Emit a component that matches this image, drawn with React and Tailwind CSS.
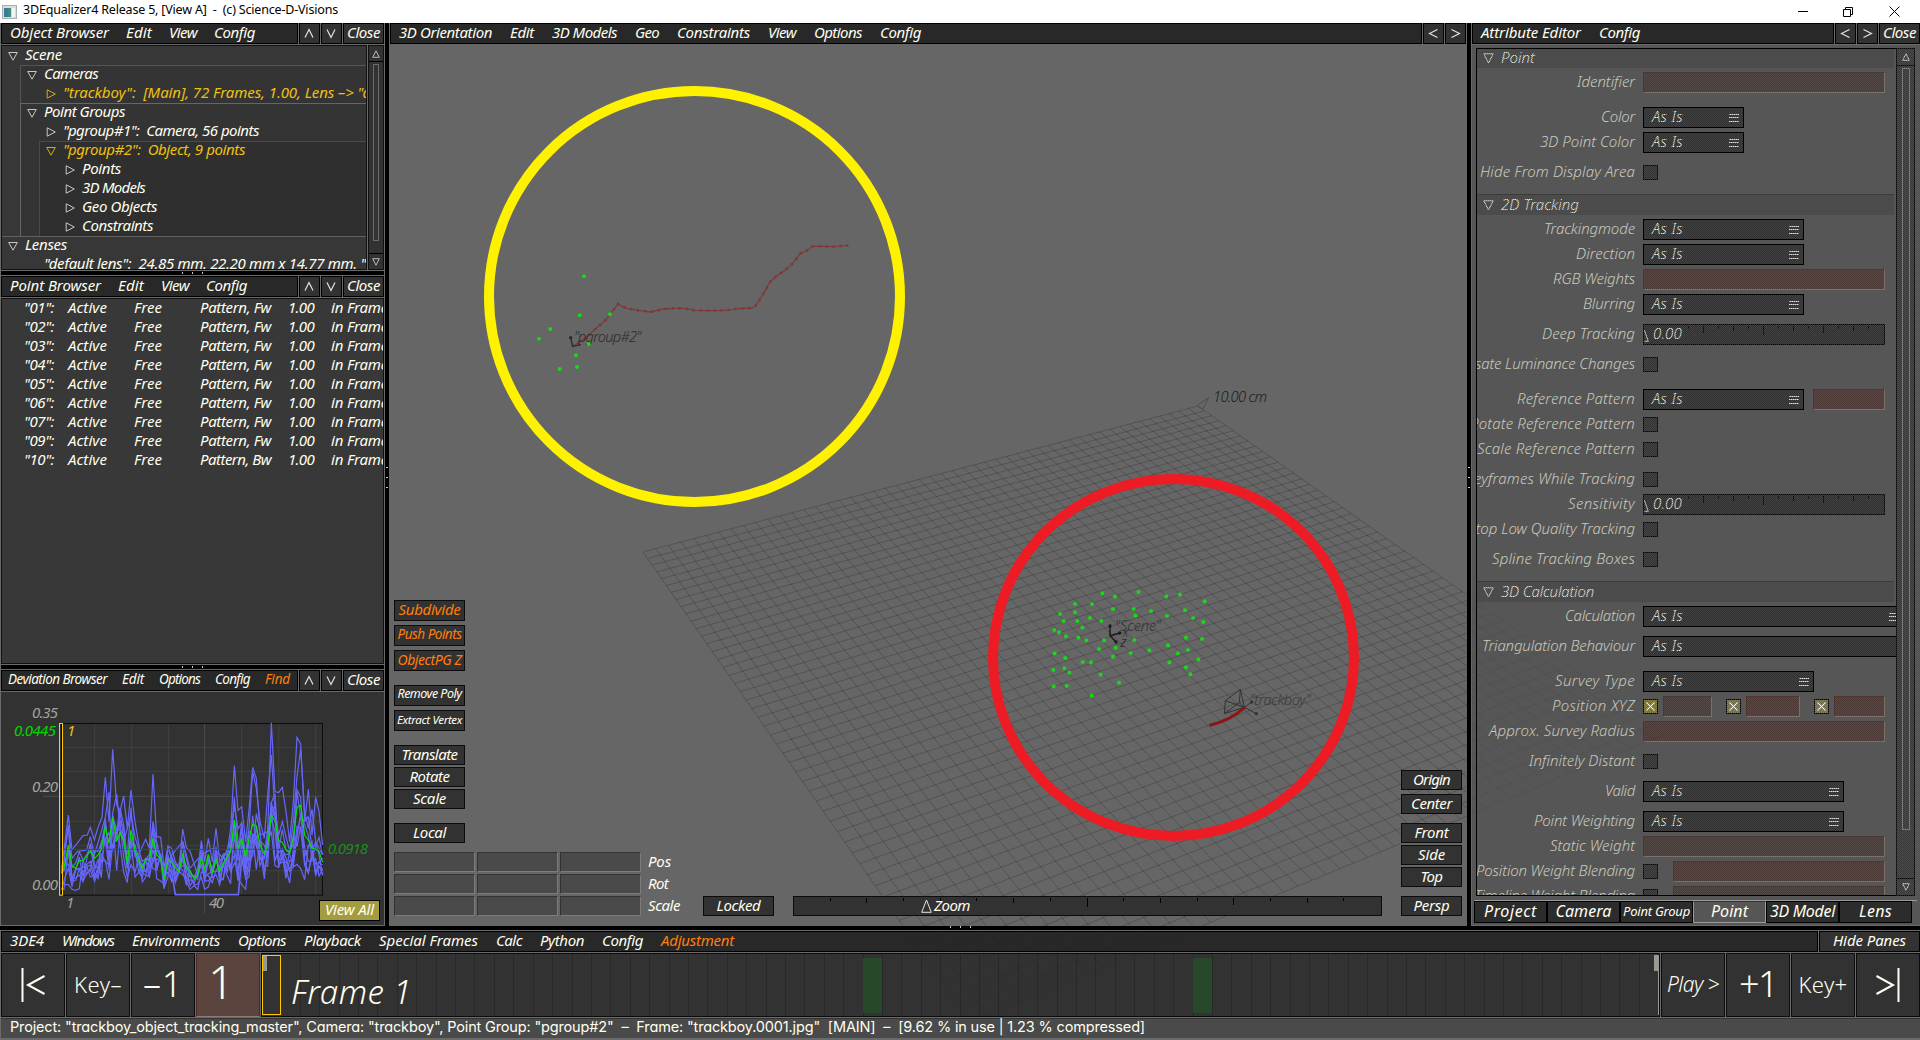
import React, { useLayoutEffect, useRef, useState } from "react";

/* Text whose letter spacing is tuned so that it spans w pixels. */
function Fit({ w, className = "", children }) {
  const ref = useRef(null);
  const [ls, setLs] = useState(0);
  useLayoutEffect(() => {
    if (!w || !ref.current) return;
    const el = ref.current;
    el.style.letterSpacing = "0px";
    const n = String(children).length;
    setLs((w - el.getBoundingClientRect().width) / n);
  }, [w, children]);
  return (
    <span ref={ref} className={"inline-block whitespace-pre pb-0.5 leading-none " + className} style={{ letterSpacing: ls + "px" }}>
      {children}
    </span>
  );
}

function Chevron({ dir }) {
  const d = { up: "M1 9.5 5 1.5 9 9.5", down: "M1 1.5 5 9.5 9 1.5", left: "M9.5 1.5 1.5 5.5 9.5 9.5", right: "M1.5 1.5 9.5 5.5 1.5 9.5" }[dir];
  return (
    <svg className="h-[11px] w-[11px]" viewBox="0 0 11 11" fill="none" stroke="#e6e6d8" strokeWidth="1.2">
      <path d={d} />
    </svg>
  );
}

function Cell({ className = "", children }) {
  return <div className={"flex shrink-0 items-center justify-center border border-black bg-[#323232] " + className}>{children}</div>;
}

function MenuBar({ items, arrows, close = true, small, gap = "gap-[17px]", className = "" }) {
  return (
    <div className={"flex h-[21px] shrink-0 gap-px bg-[#6a6a6a] " + className}>
      <div className={"flex min-w-0 flex-1 items-center border border-black bg-[#282828] " + gap + (small ? " pl-1.5 text-[13.5px]" : " pl-2")}>
        {items.map(([t, w, c]) => (
          <Fit key={t} w={w} className={c || ""}>{t}</Fit>
        ))}
      </div>
      {arrows.map((a) => (
        <Cell key={a} className="w-[21px]"><Chevron dir={a} /></Cell>
      ))}
      {close && <Cell className="w-[41px]"><Fit w={33}>Close</Fit></Cell>}
    </div>
  );
}

function Dots({ vertical }) {
  return (
    <div className={"flex items-center justify-center gap-[9px] " + (vertical ? "flex-col" : "")}>
      {[0, 1, 2].map((i) => (
        <i key={i} className={"bg-[#c8c8c8] " + (vertical ? "h-px w-0.5" : "h-0.5 w-px")} />
      ))}
    </div>
  );
}

function Tri({ open, color = "#c8c8be" }) {
  return (
    <svg className="mr-[7px] h-[10px] w-[10px] shrink-0" viewBox="0 0 10 10" fill="none" stroke={color} strokeWidth="1">
      <path d={open ? "M.7 1.5H9.3L5 9.2Z" : "M1.2 .8V9.2L9.3 5Z"} />
    </svg>
  );
}

function TreeRow({ open, leaf, w, hot, pad, children }) {
  return (
    <div className={"flex h-[19px] items-center " + pad + (hot ? " text-[#f0c010]" : "")}>
      {leaf ? <span className="w-[17px] shrink-0" /> : <Tri open={open} color={hot ? "#d8aa10" : undefined} />}
      <Fit w={w}>{children}</Fit>
    </div>
  );
}

function ObjectBrowser() {
  return (
    <div className="flex h-[226px] gap-px border-t border-[#6a6a6a] bg-[#6a6a6a]">
      <div className="min-w-0 flex-1 overflow-hidden border border-[#111] bg-[#373737]">
        <TreeRow open w={37} pad="pl-[6px]">Scene</TreeRow>
        <div className="ml-[18px] border-l border-t border-[#555] bg-[#343434]">
          <div className="-mt-px">
            <TreeRow open w={54} pad="pl-[6px]">Cameras</TreeRow>
            <TreeRow w={308} hot pad="pl-[25px]">{'"trackboy":  [Main], 72 Frames, 1.00, Lens –> "d'}</TreeRow>
          </div>
        </div>
        <div className="ml-[18px] border-l border-t border-[#666] bg-[#343434]">
          <div className="-mt-px">
            <TreeRow open w={81} pad="pl-[6px]">Point Groups</TreeRow>
            <TreeRow w={196} pad="pl-[25px]">{'"pgroup#1":  Camera, 56 points'}</TreeRow>
          </div>
          <div className="ml-[18px] border-l border-t border-[#4a4a4a] bg-[#2f2f2f]">
            <div className="-mt-px">
              <TreeRow open w={182} hot pad="pl-[6px]">{'"pgroup#2":  Object, 9 points'}</TreeRow>
              <TreeRow w={39} pad="pl-[25px]">Points</TreeRow>
              <TreeRow w={63} pad="pl-[25px]">3D Models</TreeRow>
              <TreeRow w={75} pad="pl-[25px]">Geo Objects</TreeRow>
              <TreeRow w={71} pad="pl-[25px]">Constraints</TreeRow>
            </div>
          </div>
        </div>
        <div className="border-t border-[#606060]">
          <div className="-mt-px">
            <TreeRow open w={42} pad="pl-[6px]">Lenses</TreeRow>
            <TreeRow leaf w={322} pad="pl-[25px]">{'"default lens":  24.85 mm. 22.20 mm x 14.77 mm. "'}</TreeRow>
          </div>
        </div>
      </div>
      <div className="flex w-4 flex-col border border-[#111] bg-[#323232]">
        <div className="flex h-4 items-center justify-center border-b border-black">
          <svg className="h-2 w-2" viewBox="0 0 8 8" fill="none" stroke="#bbb"><path d="M4 .8 7.3 7.3H.7Z" /></svg>
        </div>
        <div className="flex flex-1 justify-center pt-0.5"><div className="h-[177px] w-1.5 border border-[#6a6a6a]" /></div>
        <div className="flex h-4 items-center justify-center border-t border-black">
          <svg className="h-2 w-2" viewBox="0 0 8 8" fill="none" stroke="#bbb"><path d="M.7 .7H7.3L4 7.2Z" /></svg>
        </div>
      </div>
    </div>
  );
}

const POINTS = [["01", "Fw"], ["02", "Fw"], ["03", "Fw"], ["04", "Fw"], ["05", "Fw"], ["06", "Fw"], ["07", "Fw"], ["09", "Fw"], ["10", "Bw"]];

function PointBrowser() {
  return (
    <div className="h-[368px] border-y border-[#6a6a6a]">
      <div className="h-full overflow-hidden border border-[#111] bg-[#383838]">
        {POINTS.map(([n, dir]) => (
          <div key={n} className="grid h-[19px] grid-cols-[44px_66px_66px_88px_43px_50px] items-center justify-items-start overflow-hidden pl-[22px]">
            <Fit w={30}>{`"${n}":`}</Fit>
            <Fit w={39}>Active</Fit>
            <Fit w={28}>Free</Fit>
            <Fit w={71}>{`Pattern, ${dir}`}</Fit>
            <Fit w={26}>1.00</Fit>
            <Fit w={57}>in Frame</Fit>
          </div>
        ))}
      </div>
    </div>
  );
}

/* Average deviation curve, one vertex per frame. */
const AVG = [[185, 655], [192, 640], [205, 570], [216, 633], [227, 640], [238, 617], [249, 617], [260, 603], [271, 588], [284, 610], [294, 600], [304, 583], [316, 515], [327, 565], [338, 487], [350, 557], [360, 533], [371, 555], [382, 627], [393, 525], [405, 587], [416, 617], [427, 640], [437, 613], [448, 615], [459, 550], [470, 600], [482, 610], [492, 675], [504, 613], [515, 622], [526, 638], [537, 650], [548, 595], [559, 638], [570, 647], [583, 672], [593, 660], [604, 610], [614, 643], [625, 598], [637, 655], [648, 613], [659, 650], [670, 625], [682, 605], [692, 590], [703, 495], [714, 580], [725, 553], [737, 605], [747, 550], [758, 508], [769, 513], [780, 570], [793, 597], [803, 570], [814, 480], [825, 497], [836, 557], [847, 562], [858, 585], [869, 595], [880, 550], [891, 457], [902, 451], [914, 540], [925, 555], [936, 580], [947, 582], [957, 590], [968, 622]];
const PEAK = "185,640 205,480 216,585 249,542 262,540 271,517 283,555 294,517 306,487 316,367 327,500 338,283 350,450 360,470 371,423 382,520 393,405 405,500 420,590 437,553 448,580 459,357 470,545 482,547 492,640 504,573 515,580 526,620 537,640 548,522 559,578 570,588 593,660 604,557 614,620 625,550 637,620 648,520 659,620 670,600 682,590 692,520 703,332 714,467 725,455 737,560 747,465 758,337 769,370 780,540 803,530 814,203 825,410 836,413 847,397 858,470 869,560 880,440 891,247 902,267 914,500 925,403 936,540 947,427 957,470 968,570";
const PEAK2 = "192,600 205,517 216,610 232,590 260,585 271,545 283,600 304,530 316,487 327,412 333,560 338,475 350,417 360,520 371,560 393,480 405,545 427,620 448,600 459,500 470,560 492,650 515,600 548,560 570,640 604,600 640,580 670,610 692,560 703,427 714,560 737,590 747,520 758,350 769,400 780,500 793,550 803,420 814,300 825,470 836,540 847,500 869,590 880,500 891,365 902,283 914,470 925,520 936,463 947,560 968,600";
const TRACES = (() => {
  let s = 11;
  const rnd = () => ((s = (s * 16807) % 2147483647) / 2147483647);
  return Array.from({ length: 7 }, (_, k) => {
    let m = 0.5 + k * 0.13;
    return AVG.map(([x, y]) => {
      m = m * 0.35 + (0.08 + rnd() * 1.45) * 0.65;
      return `${x},${Math.min(706, Math.round(720 - (720 - y) * m))}`;
    }).join(" ");
  });
})();

function ChartText({ x, y, w, fill = "#a4a49c", children }) {
  return <text x={x} y={y + 15} textLength={w} fontSize="45" fill={fill}>{children}</text>;
}

function DeviationChart() {
  return (
    <div className="relative h-[235px] border-y border-[#6a6a6a] bg-[#323232]">
      <svg className="h-full w-full" viewBox="3 111 1149 699" fill="none">
        {[284, 395, 506, 725, 836, 947].map((x) => <path key={x} d={`M${x} 206V720`} stroke="#414141" strokeWidth="3" />)}
        {[277, 349, 499, 572, 647].map((y) => <path key={y} d={`M183 ${y}H967`} stroke="#414141" strokeWidth="3" />)}
        <path d="M129 424H967M614 206V774" stroke="#4c4c4c" strokeWidth="3" />
        <rect x="184.500" y="205.500" width="783" height="515" stroke="#0c0c0c" strokeWidth="3" />
        <g stroke="#6666fa" strokeWidth="3.600">
          {TRACES.map((p, i) => <polyline key={i} points={p} />)}
          <polyline points={PEAK} />
          <polyline points={PEAK2} />
          <polyline points="504,640 515,650 526,719 715,719 725,610 737,660" strokeWidth="5" />
        </g>
        <path d="M183 583H967" stroke="#1c641c" strokeWidth="3" />
        <polyline points={AVG.map((p) => p.join(",")).join(" ")} stroke="#00e400" strokeWidth="3.600" />
        <rect x="178.500" y="205.500" width="9" height="515" stroke="#ffc800" strokeWidth="3" />
        <ChartText x={96} y={175} w={78}>0.35</ChartText>
        <ChartText x={42} y={229} w={126} fill="#00d800">0.0445</ChartText>
        <ChartText x={201} y={228} w={16} fill="#f0c010">1</ChartText>
        <ChartText x={96} y={397} w={78}>0.20</ChartText>
        <ChartText x={96} y={691} w={78}>0.00</ChartText>
        <ChartText x={198} y={745} w={16}>1</ChartText>
        <ChartText x={627} y={745} w={45}>40</ChartText>
        <ChartText x={983} y={583} w={121} fill="#1c8c1c">0.0918</ChartText>
      </svg>
      <div className="absolute bottom-[4px] right-[4px] flex h-[21px] w-[61px] items-center justify-center border border-black bg-[#a49c40]">
        <Fit w={49}>View All</Fit>
      </div>
    </div>
  );
}

/* Ground plane: a square lattice seen through a projective map. */
const CORNERS = [[643, 552], [1198, 406], [1665, 734], [970, 1022]];
function project(u, v) {
  const [[x0, y0], [x1, y1], [x2, y2], [x3, y3]] = CORNERS;
  const dx1 = x1 - x2, dx2 = x3 - x2, dx3 = x0 - x1 + x2 - x3;
  const dy1 = y1 - y2, dy2 = y3 - y2, dy3 = y0 - y1 + y2 - y3;
  const den = dx1 * dy2 - dx2 * dy1;
  const g = (dx3 * dy2 - dx2 * dy3) / den;
  const h = (dx1 * dy3 - dx3 * dy1) / den;
  const w = g * u + h * v + 1;
  return [((x1 - x0 + g * x1) * u + (x3 - x0 + h * x3) * v + x0) / w, ((y1 - y0 + g * y1) * u + (y3 - y0 + h * y3) * v + y0) / w].map((n) => n.toFixed(1)).join(" ");
}
const GRID = Array.from({ length: 51 }, (_, i) => i / 50)
  .map((t) => `M${project(t, 0)}L${project(t, 1)}M${project(0, t)}L${project(1, t)}`)
  .join("");

const SCENE_POINTS = [[367, 640], [405, 650], [475, 636], [559, 649], [600, 644], [674, 664], [285, 672], [336, 672], [399, 687], [461, 687], [513, 693], [615, 691], [285, 697], [240, 702], [466, 707], [561, 708], [330, 714], [639, 714], [251, 723], [292, 723], [364, 723], [670, 726], [307, 743], [223, 750], [237, 757], [258, 769], [295, 773], [319, 781], [372, 781], [463, 780], [618, 773], [666, 777], [357, 807], [407, 803], [564, 796], [508, 811], [624, 810], [452, 819], [224, 820], [594, 820], [256, 834], [399, 830], [655, 838], [308, 846], [333, 847], [568, 847], [220, 870], [253, 865], [618, 862], [268, 878], [362, 884], [631, 883], [221, 919], [260, 918], [417, 908], [335, 947]];
const GROUP_POINTS = [[312, 589], [299, 706], [390, 703], [211, 747], [177, 776], [326, 792], [288, 826], [291, 861], [239, 867]];
const PATH = "276,800 296,788 322,770 337,755 357,737 381,716 395,697 413,672 440,685 475,691 512,696 550,687 585,685 612,685 645,691 690,692 735,691 775,686 815,684 826,678 840,657 856,632 868,608 888,589 915,571 938,551 960,521 980,512 997,499 1030,499 1060,500 1105,496";

function Scene() {
  return (
    <svg className="absolute inset-0 h-full w-full font-light" viewBox="389 44 1078 882" fill="none">
      <path d={GRID} stroke="#000" strokeOpacity=".19" strokeWidth="1" />
      <g transform="translate(980 380) scale(.33333)">
        <path d="M652 77 686 52 668 88Z" stroke="#4c4c4c" strokeWidth="3" />
        <text x="699" y="66" fontSize="44" textLength="162" fill="#1c1c1c">10.00 cm</text>
        <g stroke="#1c1c1c" strokeWidth="4.500"><path d="M390 738V767L408 786M390 767 419 759" /></g>
        <g fill="#1c1c1c"><circle cx="390" cy="738" r="5" /><circle cx="419" cy="759" r="5" /><circle cx="408" cy="786" r="5" /></g>
        <text x="405" y="752" fontSize="44" textLength="138" fill="#333">"Scene"</text>
        <text x="428" y="770" fontSize="30" fill="#222">X</text>
        <text x="421" y="801" fontSize="32" fill="#111">Z</text>
        <path d="M736 962 781 928 778 968 733 1001ZM793 982 736 962M793 982 781 928M793 982 778 968M793 982 733 1001M793 982 829 1001M793 982 815 966" stroke="#333" strokeWidth="3" />
        <circle cx="829" cy="1001" r="5" fill="#333" />
        <circle cx="815" cy="966" r="5" fill="#333" />
        <text x="809" y="976" fontSize="44" textLength="184" fill="#3a3a3a">"trackboy"</text>
        <path d="M692 1035Q750 1022 793 984" stroke="#8c1616" strokeWidth="9" strokeLinecap="round" />
        <g fill="#18d818">{SCENE_POINTS.map(([x, y]) => <rect key={x + "," + y} x={x - 5.5} y={y - 5.5} width="11" height="11" rx="3" />)}</g>
      </g>
      <g transform="translate(480 80) scale(.33333)">
        <polyline points={PATH} stroke="#7d3c3c" strokeWidth="4" />
        <polyline points={PATH} stroke="#843434" strokeWidth="8" strokeDasharray="5 16" />
        <path d="M272 773 278 799 303 794" stroke="#2a2a2a" strokeWidth="4" />
        <circle cx="272" cy="773" r="5" fill="#2a2a2a" />
        <text x="282" y="786" fontSize="44" textLength="202" fill="#2c2c2c">"pgroup#2"</text>
        <g fill="#18d818">{GROUP_POINTS.map(([x, y]) => <circle key={x} cx={x} cy={y} r="6" />)}</g>
      </g>
      <circle cx="694.500" cy="296.500" r="205.500" stroke="#fff200" strokeWidth="10" />
      <ellipse cx="1173.500" cy="657.500" rx="180.500" ry="178.500" stroke="#ed1c24" strokeWidth="10" />
    </svg>
  );
}

function Btn({ w, className = "", children }) {
  return (
    <div className={"flex items-center justify-center border border-[#0c0c0c] bg-[#323232] " + className}>
      <Fit w={w}>{children}</Fit>
    </div>
  );
}

const TICKS = ["h-[3px]", "h-[5px]", "h-[3px]", "h-[7px]", "h-[3px]", "h-[5px]", "h-[3px]", "h-[9px]", "h-[3px]", "h-[5px]", "h-[3px]", "h-[7px]", "h-[3px]", "h-[5px]", "h-[3px]", "h-0"];

function Viewport() {
  return (
    <div className="relative flex flex-1 items-end overflow-hidden bg-[#666] pb-[10px] pl-[5px] pr-[5px]">
      <Scene />
      <div className="relative">
        <div className="flex w-[71px] flex-col">
          <Btn w={62} className="h-[21px] text-[#ff7f0a]">Subdivide</Btn>
          <Btn w={64} className="mt-1 h-[21px] text-[13.500px] text-[#ff7f0a]">Push Points</Btn>
          <Btn w={64} className="mt-1 h-[21px] text-[14px] text-[#ff7f0a]">ObjectPG Z</Btn>
          <Btn w={64} className="mt-3.5 h-[21px] text-[12.500px]">Remove Poly</Btn>
          <Btn w={65} className="mt-1 h-[21px] text-[11.500px]">Extract Vertex</Btn>
          <Btn w={56} className="mt-3.5 h-5">Translate</Btn>
          <Btn w={40} className="mt-0.5 h-5">Rotate</Btn>
          <Btn w={33} className="mt-0.5 h-5">Scale</Btn>
          <Btn w={33} className="mt-3.5 h-5">Local</Btn>
        </div>
        <div className="mt-[9px] grid grid-cols-[81px_81px_81px_38px] gap-x-0.5 gap-y-0.5">
          {[["Pos", 23], ["Rot", 20], ["Scale", 32]].map(([t, w]) => (
            <React.Fragment key={t}>
              {[0, 1, 2].map((i) => <div key={i} className="h-5 border border-b-[#7c7c7c] border-l-[#333] border-r-[#7c7c7c] border-t-[#333] bg-[#4a4a4a]" />)}
              <div className="flex items-center pl-[5px]"><Fit w={w}>{t}</Fit></div>
            </React.Fragment>
          ))}
        </div>
      </div>
      <Btn w={44} className="relative ml-[22px] h-5 w-[71px]">Locked</Btn>
      <div className="relative ml-[19px] flex h-5 w-[589px] border border-[#0c0c0c] bg-[#323232] pt-px">
        {TICKS.map((h, i) => <div key={i} className="flex flex-1 justify-end"><i className={"w-px bg-black " + h} /></div>)}
        <div className="absolute left-[127px] top-0 flex h-full items-center gap-0.5">
          <svg className="h-[14px] w-[11px]" viewBox="0 0 11 14" fill="none" stroke="#e6e6d8"><path d="M5.500 1 10.300 13.300H.7Z" /></svg>
          <Fit w={36}>Zoom</Fit>
        </div>
      </div>
      <div className="relative ml-auto flex w-[61px] flex-col">
        <Btn w={37} className="h-5">Origin</Btn>
        <Btn w={41} className="mt-1 h-5">Center</Btn>
        <Btn w={34} className="mt-[9px] h-5">Front</Btn>
        <Btn w={27} className="mt-0.5 h-5">Side</Btn>
        <Btn w={22} className="mt-0.5 h-5">Top</Btn>
        <Btn w={36} className="mt-[9px] h-5">Persp</Btn>
      </div>
    </div>
  );
}

/* Checkered veil laid over disabled widgets. */
const VEIL = " relative after:pointer-events-none after:absolute after:-inset-px after:bg-[repeating-conic-gradient(rgba(86,86,86,.5)_0_25%,rgba(86,86,86,.05)_0_50%)] after:bg-[length:2px_2px] after:content-['']";

const Red = ({ className }) => <div className={"h-[21px] border border-b-[#8a7a74] border-l-[#4a2a26] border-r-[#8a7a74] border-t-[#4a2a26] bg-[#4e3a37] " + className + VEIL} />;
const Check = ({ on, className = "" }) => (
  <div className={"flex h-[15px] w-[15px] items-center justify-center self-center border border-black " + (on ? "bg-[#8c8440] " : "bg-[#323232] ") + className + VEIL}>
    {on && <svg className="h-[9px] w-[9px]" viewBox="0 0 9 9" stroke="#fffff0" strokeWidth="1.2"><path d="M.5 .5 8.500 8.500M8.500 .5 .5 8.500" /></svg>}
  </div>
);
const Select = ({ className, bare }) => (
  <div className={"flex h-[21px] shrink-0 items-center justify-between overflow-hidden border border-black bg-[#2e2e2e] pl-2 pr-1 " + className + VEIL}>
    <Fit w={31}>As Is</Fit>
    {!bare && <span className="flex h-[8px] w-[10px] flex-col justify-between"><i className="h-px bg-[#e0e0d4]" /><i className="h-px bg-[#e0e0d4]" /><i className="h-px bg-[#e0e0d4]" /></span>}
  </div>
);
const Slider = () => (
  <div className={"flex h-[21px] w-[242px] border border-black bg-[#2e2e2e] pt-px" + VEIL}>
    {TICKS.map((h, i) => <div key={i} className="flex flex-1 justify-end">{i > 1 && <i className={"w-px bg-black " + h} />}</div>)}
    <div className="absolute left-0 top-0 flex h-full items-center gap-1">
      <svg className="h-[14px] w-[5px]" viewBox="0 0 5 14" fill="none" stroke="#e6e6d8"><path d="M.3 2 4.300 13.300H.5" /></svg>
      <Fit w={29}>0.00</Fit>
    </div>
  </div>
);

function Row({ label, w, gap = "mt-1", children }) {
  return (
    <div className={"flex h-[21px] shrink-0 " + gap}>
      <div className="flex w-[158px] shrink-0 items-center justify-end text-[#cacabe]"><Fit w={w} className="shrink-0">{label}</Fit></div>
      <div className="ml-2 flex items-stretch">{children}</div>
    </div>
  );
}

function Section({ title, w, className = "h-[21px] mt-[11px] border-t border-[#333]" }) {
  return (
    <div className={"mr-0.5 flex shrink-0 items-center bg-[#484848] pl-1.5 " + className + VEIL}>
      <svg className="mr-[7px] h-[11px] w-[11px]" viewBox="0 0 11 11" fill="none" stroke="#e6e6d8"><path d="M.8 .8H10.200L5.500 10Z" /></svg>
      <Fit w={w}>{title}</Fit>
    </div>
  );
}

function AttributeForm() {
  return (
    <div className="flex w-[421px] flex-col overflow-hidden border border-black bg-[#565656] font-[350]">
      <Section title="Point" w={34} className="h-[19px]" />
      <Row label="Identifier" w={58}><Red className="w-[242px]" /></Row>
      <Row label="Color" w={34} gap="mt-3.5"><Select className="w-[101px]" /></Row>
      <Row label="3D Point Color" w={95}><Select className="w-[101px]" /></Row>
      <Row label="Hide From Display Area" w={155} gap="mt-[9px]"><Check /></Row>
      <Section title="2D Tracking" w={78} />
      <Row label="Trackingmode" w={91}><Select className="w-[161px]" /></Row>
      <Row label="Direction" w={59}><Select className="w-[161px]" /></Row>
      <Row label="RGB Weights" w={82}><Red className="w-[242px]" /></Row>
      <Row label="Blurring" w={52}><Select className="w-[161px]" /></Row>
      <Row label="Deep Tracking" w={93} gap="mt-[9px]"><Slider /></Row>
      <Row label="Compensate Luminance Changes" w={214} gap="mt-[9px]"><Check /></Row>
      <Row label="Reference Pattern" w={118} gap="mt-3.5"><Select className="w-[161px]" /><Red className="ml-[9px] w-[72px]" /></Row>
      <Row label="Rotate Reference Pattern" w={165}><Check /></Row>
      <Row label="Scale Reference Pattern" w={158}><Check /></Row>
      <Row label="Create Keyframes While Tracking" w={217} gap="mt-[9px]"><Check /></Row>
      <Row label="Sensitivity" w={67}><Slider /></Row>
      <Row label="Stop Low Quality Tracking" w={167}><Check /></Row>
      <Row label="Spline Tracking Boxes" w={143} gap="mt-[9px]"><Check /></Row>
      <Section title="3D Calculation" w={93} />
      <Row label="Calculation" w={70}><Select className="w-[261px]" /></Row>
      <Row label="Triangulation Behaviour" w={153} gap="mt-[9px]"><Select bare className="w-[261px]" /></Row>
      <Row label="Survey Type" w={80} gap="mt-3.5"><Select className="w-[171px]" /></Row>
      <Row label="Position XYZ" w={83}>
        <Check on /><Red className="ml-[5px] w-[49px]" />
        <Check on className="ml-[14px]" /><Red className="ml-[5px] w-[54px]" />
        <Check on className="ml-[14px]" /><Red className="ml-[5px] w-[51px]" />
      </Row>
      <Row label="Approx. Survey Radius" w={146}><Red className="w-[242px]" /></Row>
      <Row label="Infinitely Distant" w={106} gap="mt-[9px]"><Check /></Row>
      <Row label="Valid" w={30} gap="mt-[9px]"><Select className="w-[201px]" /></Row>
      <Row label="Point Weighting" w={101} gap="mt-[9px]"><Select className="w-[201px]" /></Row>
      <Row label="Static Weight" w={85}><Red className="w-[242px]" /></Row>
      <Row label="Position Weight Blending" w={159}><Check /><Red className="ml-[15px] w-[212px]" /></Row>
      <Row label="Timeline Weight Blending" w={161}><Check /><Red className="ml-[15px] w-[212px]" /></Row>
    </div>
  );
}

const TABS = [["Project", 53], ["Camera", 56], ["Point Group", 67], ["Point", 37], ["3D Model", 65], ["Lens", 33]];

function AttributeEditor() {
  return (
    <div className="flex flex-1 flex-col border-b border-l border-t border-[#6a6a6a] bg-[#565656] pl-1 pt-[3px]">
      <div className="flex h-[848px] pr-1">
        <AttributeForm />
        <div className={"-ml-px flex w-[19px] flex-col border border-black bg-[#3a3a3a]" + VEIL}>
          <div className="flex h-[17px] items-center justify-center border-b border-black">
            <svg className="h-2 w-2" viewBox="0 0 8 8" fill="none" stroke="#ddd"><path d="M4 .8 7.300 7.300H.7Z" /></svg>
          </div>
          <div className="flex flex-1 justify-center pt-0.5"><div className="h-[762px] w-2 border border-[#888]" /></div>
          <div className="flex h-[17px] items-center justify-center border-t border-black">
            <svg className="h-2 w-2" viewBox="0 0 8 8" fill="none" stroke="#ddd"><path d="M.7 .7H7.300L4 7.200Z" /></svg>
          </div>
        </div>
      </div>
      <div className="-ml-0.5 mr-[3px] mt-1 flex border-t border-[#999]">
        {TABS.map(([t, w]) => (
          <div
            key={t}
            className={
              "flex h-[22px] w-[73px] items-center justify-center border " +
              (t === "Point" ? "border-b-[#999] border-l-[#999] border-r-[#999] border-t-[#333] bg-[#565656] " : "border-black bg-[#2c2c2c] ") +
              (t === "Point Group" ? "text-[13px]" : "text-base")
            }
          >
            <Fit w={w}>{t}</Fit>
          </div>
        ))}
      </div>
    </div>
  );
}

function Big({ tone = "border-[#0c0c0c] bg-[#323232]", className = "", children }) {
  return <div className={"flex w-16 shrink-0 items-center justify-center border " + tone + " " + className}>{children}</div>;
}

function Timeline() {
  return (
    <div className="flex h-16 gap-px font-light">
      <Big>
        <svg className="h-[34px] w-6" viewBox="0 0 24 34" fill="none" stroke="#fffff0" strokeWidth="2"><path d="M1.500 0V34M23.500 8 7 17 23.500 26" /></svg>
      </Big>
      <Big className="text-[22px] not-italic"><Fit w={48}>Key–</Fit></Big>
      <Big className="text-[36px] not-italic"><Fit w={40}>–1</Fit></Big>
      <Big tone="border-x-[#4a2a26] border-t-[#4a2a26] border-b-[#8a7a74] bg-[#5c443e]" className="pb-1.5 pr-3.5 text-[45px] not-italic">
        <Fit>1</Fit>
      </Big>
      <div className="relative flex flex-1 border border-[#0c0c0c] bg-[#323232]">
        {Array.from({ length: 72 }, (_, i) => (
          <div key={i} className={"flex-1 border-r py-1 " + (i > 0 ? "border-[#282828]" : "border-transparent")}>
            {(i === 31 || i === 48) && <div className="-ml-px h-[55px] bg-[#28482a]" />}
          </div>
        ))}
        <div className="absolute left-0 top-px h-[60px] w-[19px] border border-[#ffc800]"><div className="h-[15px] w-1 bg-[#9a9a92]" /></div>
        <div className="absolute right-0 top-px h-[60px] w-[5px] border-r border-[#9a9a92]"><div className="h-[16px] bg-[#9a9a92]" /></div>
        <div className="absolute left-[29px] top-[21px] text-[33px]"><Fit w={121}>Frame 1</Fit></div>
      </div>
      <Big className="text-[21px]"><Fit w={52}>{"Play >"}</Fit></Big>
      <Big className="text-[36px] not-italic"><Fit w={38}>+1</Fit></Big>
      <Big className="text-[22px] not-italic"><Fit w={49}>Key+</Fit></Big>
      <Big>
        <svg className="h-[34px] w-6" viewBox="0 0 24 34" fill="none" stroke="#fffff0" strokeWidth="2"><path d="M22.500 0V34M.5 8 17 17 .5 26" /></svg>
      </Big>
    </div>
  );
}

function TitleBar() {
  return (
    <header className="flex h-[23px] items-center justify-between bg-white pl-0.5 pr-5 text-[12.500px] font-normal not-italic text-black">
      <div className="flex items-center gap-[6px]">
        <svg className="h-[14px] w-[15px]" viewBox="0 0 15 14">
          <rect x=".5" y=".5" width="14" height="13" fill="#dcdcdc" stroke="#a8b0b4" />
          <rect x="2" y="3" width="7" height="9" fill="#3c8c84" />
          <rect x="2" y="3" width="4" height="9" fill="#3a6ea0" opacity=".5" />
          <rect x="10" y="3" width="3" height="9" fill="#f4f4f4" />
        </svg>
        <Fit w={315}>{"3DEqualizer4 Release 5, [View A]  -  (c) Science-D-Visions"}</Fit>
      </div>
      <svg className="mb-0.5 h-[12px] w-[102px]" viewBox="0 0 102 12" fill="none" stroke="#000" strokeWidth="1">
        <path d="M0 6.500H10M45.500 4.500H52.500V11.500H45.500ZM47.500 4.500V2.500H54.500V9.500H52.500M91.500 1.500 101.500 11.500M101.500 1.500 91.500 11.500" />
      </svg>
    </header>
  );
}

export default function App() {
  return (
    <div className="relative flex h-[1040px] w-[1920px] flex-col overflow-hidden bg-black font-['Noto_Sans',sans-serif] text-[15px] font-normal italic leading-none text-[#fffff0]">
      <TitleBar />
      <main className="flex h-[903px]">
        <div className="flex w-[385px] shrink-0 flex-col border-x border-[#6a6a6a]">
          <MenuBar arrows={["up", "down"]} items={[["Object Browser", 99], ["Edit", 26], ["View", 28], ["Config", 41]]} />
          <ObjectBrowser />
          <div className="h-[5px] border-t border-[#6a6a6a] pt-px"><Dots /></div>
          <MenuBar className="border-t border-[#6a6a6a] !h-[22px]" arrows={["up", "down"]} items={[["Point Browser", 91], ["Edit", 26], ["View", 28], ["Config", 41]]} />
          <PointBrowser />
          <div className="h-[4px] pt-px"><Dots /></div>
          <MenuBar small gap="gap-[15px]" className="border-t border-[#6a6a6a] !h-[22px]" arrows={["up", "down"]} items={[["Deviation Browser", 99], ["Edit", 22], ["Options", 41], ["Config", 35], ["Find", 25, "text-[#ff7f0a]"]]} />
          <DeviationChart />
        </div>
        <div className="flex w-1 shrink-0 items-center justify-center pt-1.5"><Dots vertical /></div>
        <div className="flex w-[1078px] shrink-0 flex-col">
          <MenuBar close={false} gap="gap-[18px]" className="pl-px pr-px" arrows={["left", "right"]} items={[["3D Orientation", 93], ["Edit", 24], ["3D Models", 65], ["Geo", 24], ["Constraints", 73], ["View", 28], ["Options", 48], ["Config", 41]]} />
          <Viewport />
        </div>
        <div className="flex w-1 shrink-0 items-center justify-center pt-1.5"><Dots vertical /></div>
        <div className="flex min-w-0 flex-1 flex-col">
          <MenuBar gap="gap-[18px]" className="border-l border-[#6a6a6a]" arrows={["left", "right"]} items={[["Attribute Editor", 100], ["Config", 41]]} />
          <AttributeEditor />
        </div>
      </main>
      <div className="h-1"><Dots /></div>
      <footer className="flex flex-1 flex-col gap-px border-l border-t border-[#6a6a6a] bg-[#6a6a6a]">
        <div className="flex h-[21px] gap-px">
          <div className="flex flex-1 items-center gap-[18px] border border-black bg-[#282828] pl-2">
            {[["3DE4", 34], ["Windows", 52], ["Environments", 88], ["Options", 48], ["Playback", 57], ["Special Frames", 99], ["Calc", 26], ["Python", 44], ["Config", 41]].map(([t, w]) => <Fit key={t} w={w}>{t}</Fit>)}
            <Fit w={73} className="text-[#ff7f0a]">Adjustment</Fit>
          </div>
          <Cell className="w-[101px]"><Fit w={73}>Hide Panes</Fit></Cell>
        </div>
        <Timeline />
        <div className="flex h-[20px] items-center border-t border-[#333] bg-[#4a4a4a] pl-[9px] font-['Inter','Noto_Sans',sans-serif] text-[14.500px] not-italic [font-feature-settings:'cv11']">
          <Fit w={1135}>{'Project: "trackboy_object_tracking_master", Camera: "trackboy", Point Group: "pgroup#2"  –  Frame: "trackboy.0001.jpg"  [MAIN]  –  [9.62 % in use | 1.23 % compressed]'}</Fit>
        </div>
      </footer>
      <svg className="pointer-events-none absolute inset-0 h-full w-full" viewBox="0 0 1920 1040" fill="none">
        <clipPath id="outside"><path d="M1472 45H1920V925H1472ZM389 931H1472V1017H389Z" /></clipPath>
        <path d={GRID} clipPath="url(#outside)" stroke="#000" strokeOpacity=".05" />
      </svg>
    </div>
  );
}
